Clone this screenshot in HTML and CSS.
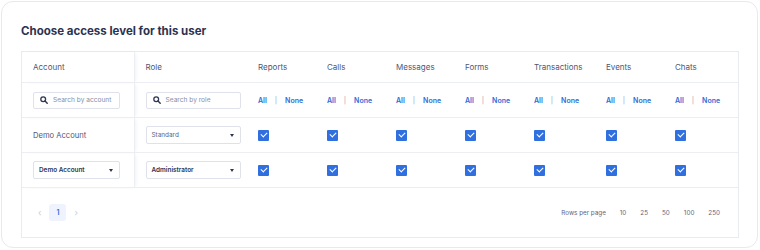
FILE: index.html
```html
<!doctype html>
<html>
<head>
    <title>Access level</title>
    <meta charset="utf-8"/>
    <link rel="stylesheet" href="styles.css">
</head>
<body>
    <div class="card">
        <h2 class="title">Choose access level for this user</h2>
        <div class="tablewrap">
            <table class="access">
                <colgroup>
                    <col class="c-account"><col class="c-role">
                    <col class="c-perm"><col class="c-perm"><col class="c-perm"><col class="c-perm">
                    <col class="c-wide"><col class="c-perm"><col>
                </colgroup>
                <thead>
                    <tr>
                        <th class="sticky">Account</th>
                        <th class="rolecol">Role</th>
                        <th>Reports</th>
                        <th>Calls</th>
                        <th>Messages</th>
                        <th>Forms</th>
                        <th>Transactions</th>
                        <th>Events</th>
                        <th>Chats</th>
                    </tr>
                </thead>
                <tbody>
                    <tr class="filters">
                        <td class="sticky"><div class="search"><svg width="8" height="8" viewBox="0 0 10 10"><circle cx="4" cy="4" r="3" fill="none" stroke="#2f3552" stroke-width="1.6"/><path d="M6.3 6.3 L9 9" stroke="#2f3552" stroke-width="1.8" stroke-linecap="round"/></svg><span>Search by account</span></div></td>
                        <td class="rolecol"><div class="search"><svg width="8" height="8" viewBox="0 0 10 10"><circle cx="4" cy="4" r="3" fill="none" stroke="#2f3552" stroke-width="1.6"/><path d="M6.3 6.3 L9 9" stroke="#2f3552" stroke-width="1.8" stroke-linecap="round"/></svg><span>Search by role</span></div></td>
                        <td><span class="link">All</span><span class="sep">|</span><span class="link">None</span></td>
                        <td><span class="link">All</span><span class="sep">|</span><span class="link">None</span></td>
                        <td><span class="link">All</span><span class="sep">|</span><span class="link">None</span></td>
                        <td><span class="link">All</span><span class="sep">|</span><span class="link">None</span></td>
                        <td><span class="link">All</span><span class="sep">|</span><span class="link">None</span></td>
                        <td><span class="link">All</span><span class="sep">|</span><span class="link">None</span></td>
                        <td><span class="link">All</span><span class="sep">|</span><span class="link">None</span></td>
                    </tr>
                    <tr>
                        <td class="sticky plain">Demo Account</td>
                        <td class="rolecol"><div class="select light"><span>Standard</span><i class="caret"></i></div></td>
                        <td><span class="check"></span></td>
                        <td><span class="check"></span></td>
                        <td><span class="check"></span></td>
                        <td><span class="check"></span></td>
                        <td><span class="check"></span></td>
                        <td><span class="check"></span></td>
                        <td><span class="check"></span></td>
                    </tr>
                    <tr>
                        <td class="sticky"><div class="select"><span>Demo Account</span><i class="caret"></i></div></td>
                        <td class="rolecol"><div class="select"><span>Administrator</span><i class="caret"></i></div></td>
                        <td><span class="check"></span></td>
                        <td><span class="check"></span></td>
                        <td><span class="check"></span></td>
                        <td><span class="check"></span></td>
                        <td><span class="check"></span></td>
                        <td><span class="check"></span></td>
                        <td><span class="check"></span></td>
                    </tr>
                </tbody>
            </table>
            <div class="footer">
                <div class="pager">
                    <span class="arrow">&lsaquo;</span>
                    <span class="page">1</span>
                    <span class="arrow">&rsaquo;</span>
                </div>
                <div class="rows">
                    <span class="rowslabel">Rows per page</span>
                    <span>10</span><span>25</span><span>50</span><span>100</span><span>250</span>
                </div>
            </div>
        </div>
    </div>
</body>
</html>
```

FILE: styles.css
```css
body {
    margin: 0;
    background: #ffffff;
    font-family: Inter, "Noto Sans", sans-serif;
    color: #3d4463;
}
.card {
    margin: 1px;
    width: 757px;
    height: 247px;
    box-sizing: border-box;
    border: 1px solid #e6e9f1;
    border-radius: 12px;
    padding: 21px 19px 0 19px;
}
.title {
    margin: 0 0 12px 0;
    font-size: 11.5px;
    font-weight: 700;
    color: #2c3250;
    line-height: 16px;
}
.tablewrap {
    border: 1px solid #e8ebf2;
    width: 718px;
    box-sizing: border-box;
}
.access {
    border-collapse: collapse;
    width: 100%;
    table-layout: fixed;
    font-size: 7.6px;
}
.c-account { width: 112px; }
.c-role { width: 113px; }
.c-perm { width: 69px; }
.c-wide { width: 72px; }
.access th {
    text-align: left;
    font-weight: 400;
    font-size: 8px;
    color: #4f5675;
    height: 30px;
    padding: 0 0 0 11px;
    border-bottom: 1px solid #eceef4;
}
.access td {
    padding: 0 0 0 11px;
    height: 34px;
    border-bottom: 1px solid #eceef4;
    white-space: nowrap;
}
.access .sticky {
    border-right: 1px solid #eceef4;
    box-shadow: 3px 0 4px -2px rgba(40, 50, 90, 0.1);
}
.plain {
    color: #4f5675;
}
.search {
    display: flex;
    align-items: center;
    gap: 5px;
    width: 87px;
    height: 17px;
    box-sizing: border-box;
    border: 1px solid #dfe2ea;
    border-radius: 2px;
    padding-left: 6px;
    font-size: 6.6px;
    color: #8a90a6;
}
.rolecol .search,
.rolecol .select {
    width: 95px;
}
.select {
    display: flex;
    align-items: center;
    justify-content: space-between;
    width: 87px;
    height: 18px;
    box-sizing: border-box;
    border: 1px solid #dfe2ea;
    border-radius: 2px;
    padding: 0 6px 0 5px;
    font-size: 6.4px;
    font-weight: 600;
    color: #2f3552;
}
.select.light {
    font-weight: 400;
    color: #5d6480;
}
.caret {
    width: 0;
    height: 0;
    border-left: 2.5px solid transparent;
    border-right: 2.5px solid transparent;
    border-top: 3px solid #2f3552;
}
.link {
    color: #2e6bd8;
    font-weight: 600;
    font-size: 7px;
}
.sep {
    color: #9aa0b4;
    font-size: 7px;
    margin: 0 8px;
}
.check {
    display: inline-block;
    width: 11px;
    height: 11px;
    background: #2f6fdf;
    border-radius: 1px;
    position: relative;
    vertical-align: middle;
}
.check::after {
    content: "";
    position: absolute;
    left: 3px;
    top: 2px;
    width: 5px;
    height: 3px;
    border-left: 1.5px solid #fff;
    border-bottom: 1.5px solid #fff;
    transform: rotate(-45deg);
}
.footer {
    display: flex;
    justify-content: space-between;
    align-items: center;
    height: 49px;
    padding: 0 18px 0 16px;
}
.pager {
    display: flex;
    align-items: center;
    gap: 8px;
    font-size: 7px;
}
.arrow {
    color: #c8ccd8;
    font-size: 9px;
}
.page {
    width: 17px;
    height: 17px;
    background: #eef3fd;
    border-radius: 3px;
    color: #2e6bd8;
    display: flex;
    align-items: center;
    justify-content: center;
    font-weight: 600;
}
.rows {
    display: flex;
    gap: 14px;
    font-size: 6.3px;
    color: #5d6480;
}
```
